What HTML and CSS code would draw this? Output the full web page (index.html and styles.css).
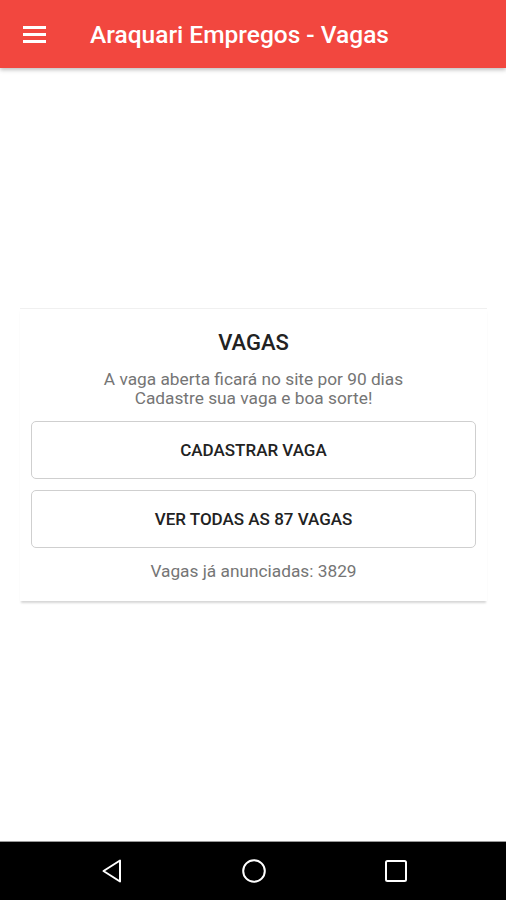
FILE: index.html
```html
<!DOCTYPE html>
<html lang="pt">
<head>
    <meta charset="UTF-8">
    <meta name="viewport" content="width=device-width, initial-scale=1.0">
    <title>Araquari Empregos - Vagas</title>
    <link rel="stylesheet" href="styles.css">
</head>
<body>

    <!-- Toolbar -->
    <header class="toolbar">
        <div class="menu-icon">
            <span></span><span></span><span></span>
        </div>
        <h1 class="toolbar-title">Araquari Empregos - Vagas</h1>
    </header>

    <main class="content">
        <div class="card">
            <h2 class="card-title">VAGAS</h2>
            <p class="card-text">A vaga aberta ficará no site por 90 dias<br>Cadastre sua vaga e boa sorte!</p>
            <button class="card-button">CADASTRAR VAGA</button>
            <button class="card-button">VER TODAS AS 87 VAGAS</button>
            <p class="card-count">Vagas já anunciadas: 3829</p>
        </div>
    </main>

    <!-- Navigation bar -->
    <footer class="navbar">
        <svg width="24" height="24" viewBox="0 0 24 24">
            <path d="M20 1.5 L20 22.5 L3.5 12 Z" fill="none" stroke="#fff" stroke-width="2" stroke-linejoin="round"/>
        </svg>
        <svg width="24" height="24" viewBox="0 0 24 24">
            <circle cx="12" cy="12" r="10.8" fill="none" stroke="#fff" stroke-width="2"/>
        </svg>
        <svg width="24" height="24" viewBox="0 0 24 24">
            <rect x="2" y="2" width="20" height="20" rx="1.5" fill="none" stroke="#fff" stroke-width="2"/>
        </svg>
    </footer>

</body>
</html>
```

FILE: styles.css
```css
body {
    margin: 0;
    font-family: Roboto, "Noto Sans", Arial, sans-serif;
    background-color: #fff;
    height: 900px;
    display: flex;
    flex-direction: column;
    overflow: hidden;
}
.toolbar {
    height: 68px;
    background-color: #f2473f;
    display: flex;
    align-items: center;
    box-shadow: 0 2px 4px rgba(0, 0, 0, 0.25);
    position: relative;
    z-index: 1;
    flex-shrink: 0;
}
.menu-icon {
    width: 23px;
    margin-left: 23px;
    display: flex;
    flex-direction: column;
    gap: 4px;
}
.menu-icon span {
    display: block;
    height: 3px;
    background-color: #fff;
}
.toolbar-title {
    margin: 0 0 0 44px;
    color: #fff;
    font-size: 24.5px;
    font-weight: 500;
}
.content {
    flex: 1;
    padding: 240px 19px 0 20px;
}
.card {
    border-top: 1px solid #f0f0f0;
    box-shadow: 0 3px 2px -1px rgba(0, 0, 0, 0.16);
    padding: 21px 11px 18px;
    text-align: center;
}
.card-title {
    margin: 0;
    font-size: 22px;
    font-weight: 500;
    color: #222;
    line-height: 26px;
}
.card-text {
    margin: 14px 0 13px;
    font-size: 17.3px;
    line-height: 19px;
    color: #757575;
}
.card-button {
    display: block;
    width: 100%;
    height: 58px;
    margin: 0 0 11px;
    background-color: #fff;
    border: 1px solid #cfcfcf;
    border-radius: 5px;
    font-family: inherit;
    font-size: 17px;
    font-weight: 500;
    color: #222;
}
.card-count {
    margin: 0;
    padding-top: 0;
    font-size: 17.3px;
    line-height: 24px;
    color: #757575;
}
.navbar {
    height: 58px;
    background-color: #000;
    display: flex;
    justify-content: space-between;
    align-items: center;
    padding: 0 98px 0 100px;
    flex-shrink: 0;
    border-top: 1px solid #999;
}
```
